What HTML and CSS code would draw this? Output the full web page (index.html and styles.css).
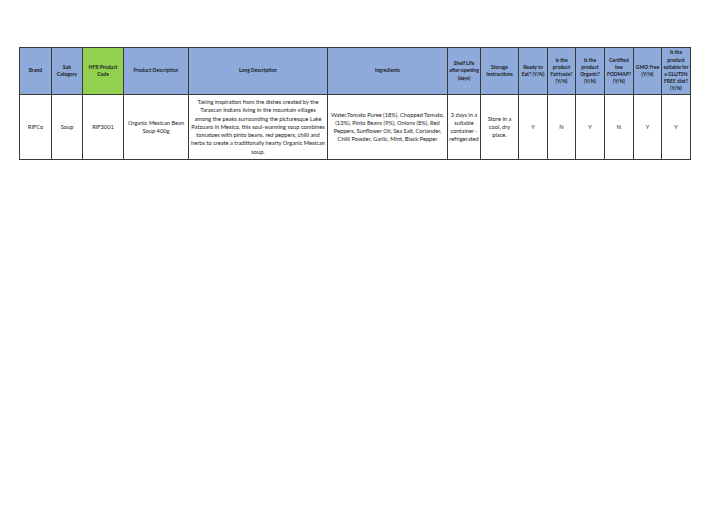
FILE: index.html
```html
<!DOCTYPE html>
<html>
<head>
<meta charset="utf-8">
<link rel="stylesheet" href="styles.css">
</head>
<body>
<div class="sheet">
<table class="grid">
<colgroup>
<col class="c1"><col class="c2"><col class="c3"><col class="c4"><col class="c5"><col class="c6"><col class="c7"><col class="c8"><col class="c9"><col class="c10"><col class="c11"><col class="c12"><col class="c13"><col class="c14">
</colgroup>
<thead>
<tr class="head">
<th>Brand</th>
<th>Sub<br>Category</th>
<th class="green">HFB Product<br>Code</th>
<th>Product Description</th>
<th>Long Description</th>
<th>Ingredients</th>
<th>Shelf Life<br>after opening<br>(days)</th>
<th>Storage<br>Instructions</th>
<th>Ready to<br>Eat? (Y/N)</th>
<th>Is the<br>product<br>Fairtrade?<br>(Y/N)</th>
<th>Is the<br>product<br>Organic?<br>(Y/N)</th>
<th>Certified<br>low<br>FODMAP?<br>(Y/N)</th>
<th>GMO Free<br>(Y/N)</th>
<th>Is the<br>product<br>suitable for<br>a GLUTEN<br>FREE diet?<br>(Y/N)</th>
</tr>
</thead>
<tbody>
<tr class="row">
<td>RIFCo</td>
<td>Soup</td>
<td>RIF3001</td>
<td>Organic Mexican Bean<br>Soup 400g</td>
<td>Taking inspiration from the dishes created by the<br>Tarascan Indians living in the mountain villages<br>among the peaks surrounding the picturesque Lake<br>Patzuaro in Mexico, this soul-warming soup combines<br>tomatoes with pinto beans, red peppers, chilli and<br>herbs to create a traditionally hearty Organic Mexican<br>soup.</td>
<td>Water,Tomato Puree (18%), Chopped Tomato,<br>(13%), Pinto Beans (9%), Onions (8%), Red<br>Peppers, Sunflower Oil, Sea Salt, Coriander,<br>Chilli Powder, Garlic, Mint, Black Pepper</td>
<td>3 days in a<br>suitable<br>container -<br>refrigerated</td>
<td>Store in a<br>cool, dry<br>place.</td>
<td>Y</td>
<td>N</td>
<td>Y</td>
<td>N</td>
<td>Y</td>
<td>Y</td>
</tr>
</tbody>
</table>
</div>
</body>
</html>
```
FILE: styles.css
```css
html, body {
  margin: 0;
  padding: 0;
  background: #ffffff;
}
.sheet {
  padding: 47px 0 0 19px;
}
.grid {
  border-collapse: collapse;
  table-layout: fixed;
  width: 672px;
  font-family: Lato, "Liberation Sans", sans-serif;
  color: #1a1a1a;
}
.c1 { width: 32px; }
.c2 { width: 31px; }
.c3 { width: 41px; }
.c4 { width: 65px; }
.c5 { width: 139px; }
.c6 { width: 120px; }
.c7 { width: 33px; }
.c8 { width: 38px; }
.c9 { width: 29px; }
.c10 { width: 28px; }
.c11 { width: 29px; }
.c12 { width: 29px; }
.c13 { width: 28px; }
.c14 { width: 29px; }
.grid th, .grid td {
  border: 1px solid #3a3a3a;
  text-align: center;
  vertical-align: middle;
  padding: 0;
  white-space: nowrap;
}
.head th {
  background: #8eaadb;
  font-size: 5px;
  font-weight: 700;
  line-height: 7.2px;
  height: 46px;
}
.head th.green {
  background: #92d050;
}
.row td {
  font-size: 5.7px;
  line-height: 8.2px;
  height: 64px;
  font-weight: 400;
}
```
